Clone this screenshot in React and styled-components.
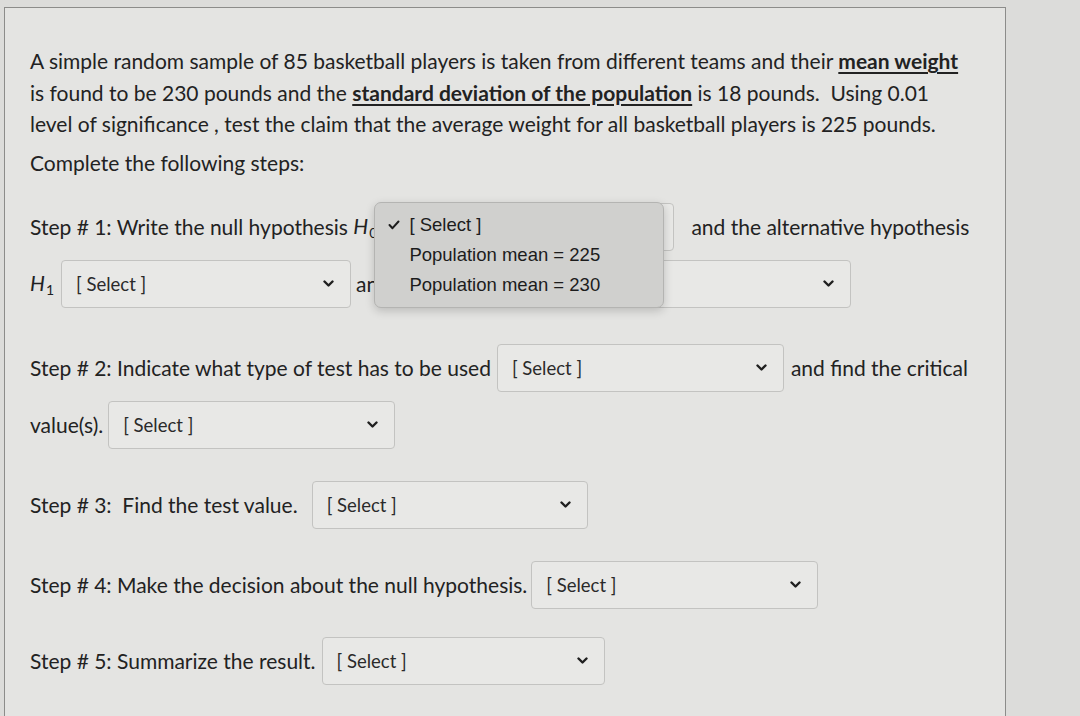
import React from "react";
import styled, { createGlobalStyle } from "styled-components";

const COLORS = {
  outside: "#dcdcda",
  page: "#e4e4e2",
  frame: "#8c8c8a",
  text: "#222222",
  selectBg: "#e8e8e6",
  selectBorder: "#c3c3c1",
  menuBg: "#d0d0ce",
  menuBorder: "#b4b4b2",
};

const GlobalStyle = createGlobalStyle`
  html, body {
    margin: 0;
    padding: 0;
    background: ${COLORS.outside};
  }
  body {
    font-family: Lato, "Open Sans", sans-serif;
    color: ${COLORS.text};
  }
`;

const Screen = styled.div`
  width: 1080px;
  height: 716px;
  overflow: hidden;
  padding-top: 7px;
  box-sizing: border-box;
`;

const Panel = styled.main`
  margin-left: 4px;
  width: 1002px;
  height: 720px;
  box-sizing: border-box;
  border: 1px solid ${COLORS.frame};
  border-bottom: none;
  background: ${COLORS.page};
  padding: 37px 0 0 25px;
  font-size: 21px;
`;

const Question = styled.p`
  margin: 0;
  line-height: 31.5px;
`;

const Emph = styled.strong`
  font-weight: 700;
  text-decoration: underline;
  text-underline-offset: 3px;
`;

const Lead = styled.p`
  margin: 7px 0 0;
  line-height: 31px;
`;

const Steps = styled.div`
  margin-top: 25px;
`;

const Step = styled.div`
  display: flex;
  flex-direction: column;
  gap: 9px;
  margin-top: ${(p) => p.$space || 0}px;
`;

const Line = styled.div`
  display: flex;
  align-items: center;
  height: 48px;
  white-space: nowrap;
`;

const Var = styled.span`
  font-style: italic;

  sub {
    font-style: normal;
    font-size: 14px;
    vertical-align: -4px;
    margin-left: 1px;
  }
`;

const SelectBox = styled.div`
  position: relative;
  width: ${(p) => p.$width || 288}px;
  height: 48px;
  flex-shrink: 0;
  box-sizing: border-box;
  margin: 0 ${(p) => p.$after ?? 8}px 0 ${(p) => p.$before ?? 8}px;
  border: 1px solid ${COLORS.selectBorder};
  border-radius: 4px;
  background: ${COLORS.selectBg};
  display: flex;
  align-items: center;
  justify-content: space-between;
  padding: 0 16px 0 14px;
  font-size: 18.5px;
  color: #2a2a2a;
`;

const Menu = styled.ul`
  position: absolute;
  z-index: 5;
  left: -8px;
  top: -2px;
  width: 290px;
  height: 106px;
  box-sizing: border-box;
  margin: 0;
  padding: 7px 0 0;
  list-style: none;
  background: ${COLORS.menuBg};
  border: 1px solid ${COLORS.menuBorder};
  border-radius: 7px;
  box-shadow: 0 3px 10px rgba(0, 0, 0, 0.18);
  font-family: "Liberation Sans", Arial, sans-serif;
  font-size: 18.5px;
  color: #1c1c1c;
`;

const MenuItem = styled.li`
  position: relative;
  height: 30px;
  line-height: 30px;
  padding-left: 34px;
`;

const Check = styled.svg`
  position: absolute;
  left: 13px;
  top: 10px;
`;

const Chevron = () => (
  <svg width="11" height="8" viewBox="0 0 11 8">
    <polyline
      points="1.5,1.5 5.5,5.5 9.5,1.5"
      fill="none"
      stroke="#1f1f1f"
      strokeWidth="2.4"
      strokeLinecap="round"
      strokeLinejoin="round"
    />
  </svg>
);

const Select = ({ width, before, after, children }) => (
  <SelectBox $width={width} $before={before} $after={after}>
    <span>[ Select ]</span>
    <Chevron />
    {children}
  </SelectBox>
);

const App = () => (
  <Screen>
    <GlobalStyle />
    <Panel>
      <Question>
        A simple random sample of 85 basketball players is taken from different teams and their{" "}
        <Emph>mean weight</Emph>
        <br />
        is found to be 230 pounds and the <Emph>standard deviation of the population</Emph> is 18
        pounds.&nbsp; Using 0.01
        <br />
        level of significance , test the claim that the average weight for all basketball players is
        225 pounds.
      </Question>
      <Lead>Complete the following steps:</Lead>

      <Steps>
        <Step>
          <Line>
            Step # 1: Write the null hypothesis&nbsp;
            <Var>
              H<sub>0</sub>
            </Var>
            <Select before={4} after={17} width={293}>
              <Menu>
                <MenuItem>
                  <Check width="12" height="10" viewBox="0 0 12 10">
                    <polyline
                      points="1.5,5 4.5,8.2 10.5,1.5"
                      fill="none"
                      stroke="#1c1c1c"
                      strokeWidth="2"
                      strokeLinecap="round"
                      strokeLinejoin="round"
                    />
                  </Check>
                  [ Select ]
                </MenuItem>
                <MenuItem>Population mean = 225</MenuItem>
                <MenuItem>Population mean = 230</MenuItem>
              </Menu>
            </Select>
            and the alternative hypothesis
          </Line>
          <Line>
            <Var>
              H<sub>1</sub>
            </Var>
            <Select before={7} after={5} width={290} />
            and identify the claim
            <Select before={10} width={287} />
          </Line>
        </Step>

        <Step $space={36}>
          <Line>
            Step # 2: Indicate what type of test has to be used
            <Select width={287} after={7} before={6} />
            and find the critical
          </Line>
          <Line>
            value(s).
            <Select before={5} width={287} />
          </Line>
        </Step>

        <Step $space={32}>
          <Line>
            Step # 3:&nbsp; Find the test value.
            <Select before={14} width={276} />
          </Line>
        </Step>

        <Step $space={32}>
          <Line>
            Step # 4: Make the decision about the null hypothesis.
            <Select before={4} width={287} />
          </Line>
        </Step>

        <Step $space={28}>
          <Line>
            Step # 5: Summarize the result.
            <Select before={6} width={283} />
          </Line>
        </Step>
      </Steps>
    </Panel>
  </Screen>
);

export default App;
